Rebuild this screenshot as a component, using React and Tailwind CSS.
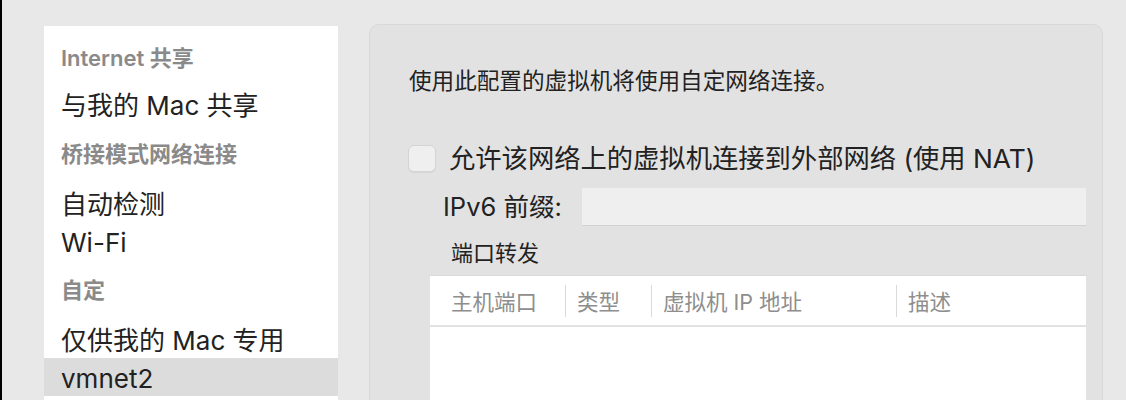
import React from "react";

const font = { fontFamily: '"Inter", "Noto Sans CJK SC", sans-serif' };

const sidebar = [
    { type: "header", label: "Internet 共享", cls: "pt-[13px] pb-[8px]" },
    { type: "item", label: "与我的 Mac 共享" },
    { type: "header", label: "桥接模式网络连接", cls: "pt-[12px] pb-[11px]" },
    { type: "item", label: "自动检测" },
    { type: "item", label: "Wi-Fi" },
    { type: "header", label: "自定", cls: "pt-[11px] pb-[10px]" },
    { type: "item", label: "仅供我的 Mac 专用", cls: "h-[39px]" },
    { type: "item", label: "vmnet2", selected: true }
];

function Sidebar() {
    return (
        <div className="ml-[42px] mt-[26px] w-[294px] h-[420px] shrink-0 bg-white">
            {sidebar.map((row) =>
                row.type === "header" ? (
                    <div key={row.label} className={`${row.cls} px-[17px]`}>
                        <div className="leading-[38px] text-[22px] font-semibold text-[#8a8a8a]">
                            {row.label}
                        </div>
                    </div>
                ) : (
                    <div
                        key={row.label}
                        className={`${row.cls || "h-[38px]"} flex items-center pt-[3px] px-[17px] text-[26px] text-[#222222] ${
                            row.selected ? "bg-[#dcdcdc]" : ""
                        }`}
                    >
                        {row.label}
                    </div>
                )
            )}
        </div>
    );
}

function PortTable() {
    const cols = ["类型", "虚拟机 IP 地址", "描述"];
    return (
        <div className="ml-[60px] mt-[6px] w-[656px] h-[200px] bg-white border-t border-[#d9d9d9]">
            <div className="h-[51px] pt-[3px] grid grid-cols-[135px_86px_245px_1fr] border-b-2 border-[#e2e2e2] text-[21.5px] text-[#8e8e8e]">
                <div className="flex items-center pl-[21px]">主机端口</div>
                {cols.map((c) => (
                    <div key={c} className="flex items-center">
                        <div className="w-px h-[32px] -mt-[3px] bg-[#dadada]" />
                        <div className="pl-[11px]">{c}</div>
                    </div>
                ))}
            </div>
        </div>
    );
}

function Panel() {
    return (
        <div className="ml-[31px] mt-[24px] w-[734px] h-[420px] shrink-0 rounded-[10px] border border-[#d8d8d8] bg-[#e2e2e2] text-[#222222]">
            <div className="mt-[40px] ml-[39px] leading-[32px] text-[22.6px]">
                使用此配置的虚拟机将使用自定网络连接。
            </div>
            <div className="mt-[45px] ml-[38px] h-[32px] flex items-center gap-[13px]">
                <div className="w-[28px] h-[27px] rounded-[6px] border border-[#d4d4d4] bg-[#efefef] shadow-[0_1px_1px_rgba(0,0,0,0.06)]" />
                <div className="pt-[2px] text-[26.3px]">允许该网络上的虚拟机连接到外部网络 (使用 NAT)</div>
            </div>
            <div className="mt-[14px] flex items-center h-[38px]">
                <div className="ml-[73px] w-[139px] pt-[1px] text-[25.5px]">IPv6 前缀:</div>
                <div className="w-[504px] h-[38px] bg-[#efefef] border-b border-[#d2d2d2]" />
            </div>
            <div className="mt-[11px] ml-[81px] leading-[32px] text-[22px]">端口转发</div>
            <PortTable />
        </div>
    );
}

export default function App() {
    return (
        <div
            style={font}
            className="w-[1126px] h-[400px] overflow-hidden flex bg-[#e8e8e8] border-l-2 border-black"
        >
            <Sidebar />
            <Panel />
        </div>
    );
}
